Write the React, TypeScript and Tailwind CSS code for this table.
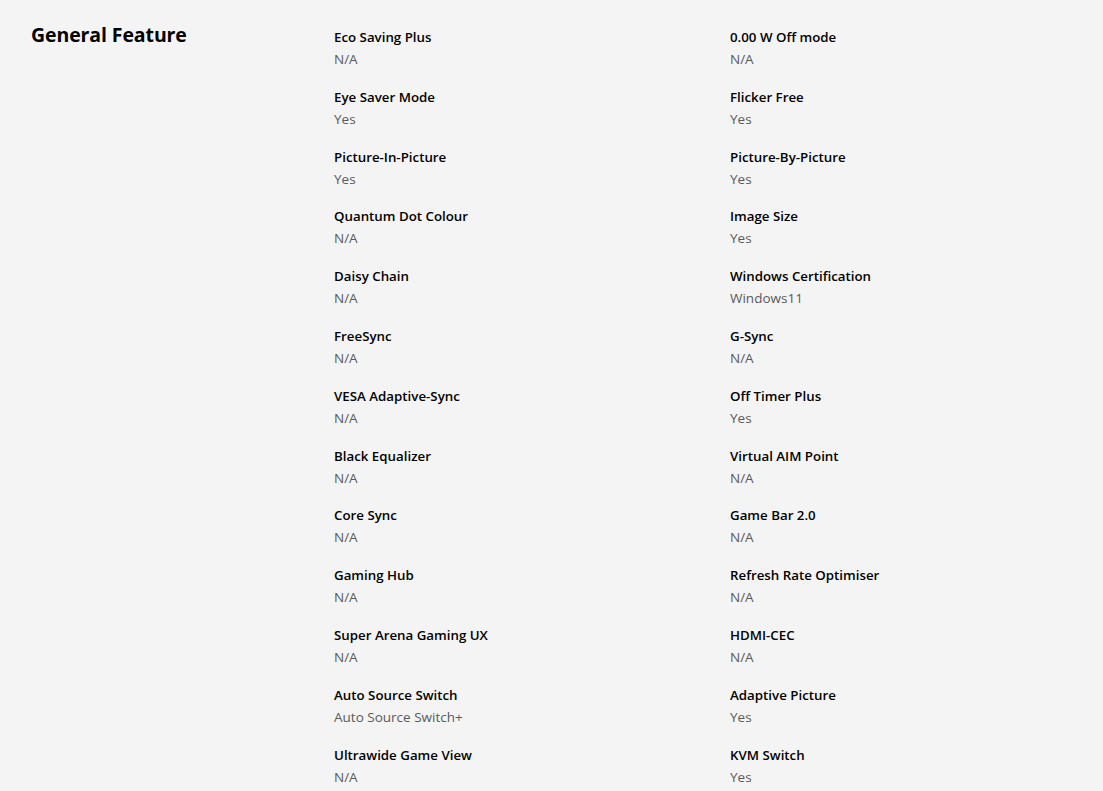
import React from 'react';

type Spec = { label: string; value: string };

const specs: Spec[] = [
  { label: 'Eco Saving Plus', value: 'N/A' },
  { label: '0.00 W Off mode', value: 'N/A' },
  { label: 'Eye Saver Mode', value: 'Yes' },
  { label: 'Flicker Free', value: 'Yes' },
  { label: 'Picture-In-Picture', value: 'Yes' },
  { label: 'Picture-By-Picture', value: 'Yes' },
  { label: 'Quantum Dot Colour', value: 'N/A' },
  { label: 'Image Size', value: 'Yes' },
  { label: 'Daisy Chain', value: 'N/A' },
  { label: 'Windows Certification', value: 'Windows11' },
  { label: 'FreeSync', value: 'N/A' },
  { label: 'G-Sync', value: 'N/A' },
  { label: 'VESA Adaptive-Sync', value: 'N/A' },
  { label: 'Off Timer Plus', value: 'Yes' },
  { label: 'Black Equalizer', value: 'N/A' },
  { label: 'Virtual AIM Point', value: 'N/A' },
  { label: 'Core Sync', value: 'N/A' },
  { label: 'Game Bar 2.0', value: 'N/A' },
  { label: 'Gaming Hub', value: 'N/A' },
  { label: 'Refresh Rate Optimiser', value: 'N/A' },
  { label: 'Super Arena Gaming UX', value: 'N/A' },
  { label: 'HDMI-CEC', value: 'N/A' },
  { label: 'Auto Source Switch', value: 'Auto Source Switch+' },
  { label: 'Adaptive Picture', value: 'Yes' },
  { label: 'Ultrawide Game View', value: 'N/A' },
  { label: 'KVM Switch', value: 'Yes' },
];

export default function App() {
  return (
    <div className="min-h-[791px] bg-[#f4f4f4] font-['Open_Sans',sans-serif] text-[#000]">
      <section className="flex pl-[31px] pt-[22px]">
        <h2 className="w-[303px] shrink-0 text-[19.5px] font-bold leading-[26px] tracking-[-0.1px] text-black">
          General Feature
        </h2>
        <dl className="grid min-w-0 flex-1 grid-cols-[396px_1fr] gap-y-[17.8px] pt-[5px]">
          {specs.map((spec) => (
            <div key={spec.label} className="flex flex-col gap-[2px]">
              <dt className="text-[13.3px] font-semibold leading-5 text-black">{spec.label}</dt>
              <dd className="text-[13.5px] leading-5 text-[#5a5a5a]">{spec.value}</dd>
            </div>
          ))}
        </dl>
      </section>
    </div>
  );
}
